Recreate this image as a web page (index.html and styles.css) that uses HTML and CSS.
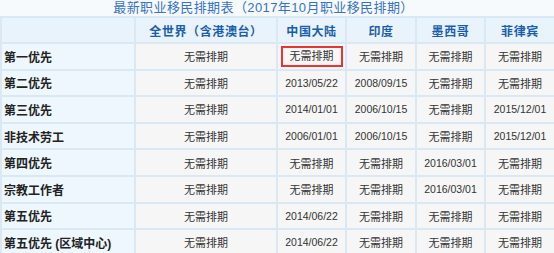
FILE: index.html
```html
<!DOCTYPE html>
<html lang="zh-CN">
<head>
<meta charset="utf-8">
<title>最新职业移民排期表</title>
<link rel="stylesheet" href="styles.css">
</head>
<body>
<div class="page">
  <div class="title">最新职业移民排期表（2017年10月职业移民排期）</div>
  <table class="grid">
    <colgroup>
      <col class="c-cat"><col class="c-world"><col class="c-n"><col class="c-w"><col class="c-n"><col class="c-w">
    </colgroup>
    <thead>
      <tr>
        <th></th>
        <th>全世界（含港澳台）</th>
        <th>中国大陆</th>
        <th>印度</th>
        <th>墨西哥</th>
        <th>菲律宾</th>
      </tr>
    </thead>
    <tbody>
      <tr><td class="cat">第一优先</td><td>无需排期</td><td><span class="mark">无需排期</span></td><td>无需排期</td><td>无需排期</td><td>无需排期</td></tr>
      <tr><td class="cat">第二优先</td><td>无需排期</td><td class="num">2013/05/22</td><td class="num">2008/09/15</td><td>无需排期</td><td>无需排期</td></tr>
      <tr><td class="cat">第三优先</td><td>无需排期</td><td class="num">2014/01/01</td><td class="num">2006/10/15</td><td>无需排期</td><td class="num">2015/12/01</td></tr>
      <tr><td class="cat">非技术劳工</td><td>无需排期</td><td class="num">2006/01/01</td><td class="num">2006/10/15</td><td>无需排期</td><td class="num">2015/12/01</td></tr>
      <tr><td class="cat">第四优先</td><td>无需排期</td><td>无需排期</td><td>无需排期</td><td class="num">2016/03/01</td><td>无需排期</td></tr>
      <tr><td class="cat">宗教工作者</td><td>无需排期</td><td>无需排期</td><td>无需排期</td><td class="num">2016/03/01</td><td>无需排期</td></tr>
      <tr><td class="cat">第五优先</td><td>无需排期</td><td class="num">2014/06/22</td><td>无需排期</td><td>无需排期</td><td>无需排期</td></tr>
      <tr><td class="cat">第五优先 (区域中心)</td><td>无需排期</td><td class="num">2014/06/22</td><td>无需排期</td><td>无需排期</td><td>无需排期</td></tr>
    </tbody>
  </table>
</div>
</body>
</html>
```
FILE: styles.css
```css
html, body {
  margin: 0;
  padding: 0;
  background: #f6fafd;
  overflow: hidden;
}
.page {
  width: 556px;
  font-family: "Liberation Sans", "Noto Sans CJK SC", sans-serif;
}
.title {
  height: 16px;
  line-height: 16px;
  font-size: 13px;
  letter-spacing: 0.4px;
  color: #3873c0;
  text-align: center;
  padding-right: 29px;
  white-space: nowrap;
}
.grid {
  border-collapse: separate;
  border-spacing: 0;
  table-layout: fixed;
  width: 556px;
  border-top: 2px solid #dae8f4;
  border-left: 2px solid #dae8f4;
}
.c-cat { width: 134px; }
.c-world { width: 142px; }
.c-n { width: 69px; }
.c-w { width: 70px; }
.grid th,
.grid td {
  border-right: 2px solid #dae8f4;
  border-bottom: 2px solid #dae8f4;
  padding: 0;
  height: 24.6px;
  box-sizing: content-box;
  text-align: center;
  white-space: nowrap;
  overflow: hidden;
}
.grid th {
  height: 24px;
  background: #e9f3fc;
  color: #1b5faa;
  font-size: 12px;
  font-weight: bold;
  letter-spacing: 0.6px;
}
.grid td {
  background: #f6f6f6;
  color: #333;
  font-size: 11px;
}
.grid td.num {
  font-size: 10.5px;
}
.grid td.cat {
  background: #eef6fe;
  color: #222;
  font-size: 12px;
  font-weight: bold;
  text-align: left;
  padding-left: 2px;
}
.mark {
  display: inline-block;
  border: 2px solid #e8352f;
  padding: 2px 7px;
  line-height: 13px;
}
```
